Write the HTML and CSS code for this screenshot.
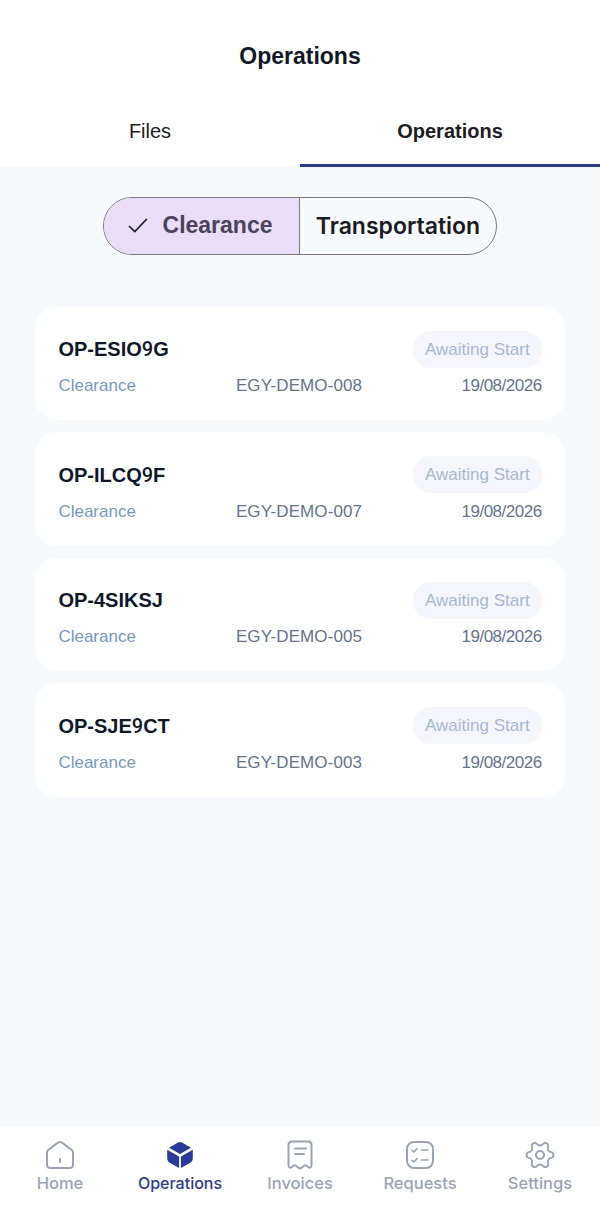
FILE: index.html
```html
<!DOCTYPE html>
<html lang="en">
<head>
    <meta charset="UTF-8">
    <meta name="viewport" content="width=device-width, initial-scale=1.0">
    <title>Operations</title>
    <link rel="stylesheet" href="styles.css">
</head>
<body>
    <div class="app">
        <header class="top">
            <h1 class="title">Operations</h1>
            <div class="tabs">
                <div class="tab">Files</div>
                <div class="tab active">Operations</div>
            </div>
        </header>

        <main class="content">
            <div class="segments">
                <div class="segment selected">
                    <svg class="check" width="20" height="15" viewBox="0 0 20 15" fill="none"><path d="M1 8l5.800 5.600L18.800 1" stroke="#1d1a24" stroke-width="1.700"/></svg>
                    <span>Clearance</span>
                </div>
                <div class="segment">Transportation</div>
            </div>

            <div class="cards">
                <div class="card">
                    <div class="row">
                        <span class="code">OP-ESIO<span class="digit">9</span>G</span>
                        <span class="status">Awaiting Start</span>
                    </div>
                    <div class="row meta">
                        <span class="type">Clearance</span>
                        <span class="ref">EGY-DEMO-008</span>
                        <span class="date">19/08/2026</span>
                    </div>
                </div>
                <div class="card">
                    <div class="row">
                        <span class="code">OP-ILCQ<span class="digit">9</span>F</span>
                        <span class="status">Awaiting Start</span>
                    </div>
                    <div class="row meta">
                        <span class="type">Clearance</span>
                        <span class="ref">EGY-DEMO-007</span>
                        <span class="date">19/08/2026</span>
                    </div>
                </div>
                <div class="card">
                    <div class="row">
                        <span class="code">OP-4SIKSJ</span>
                        <span class="status">Awaiting Start</span>
                    </div>
                    <div class="row meta">
                        <span class="type">Clearance</span>
                        <span class="ref">EGY-DEMO-005</span>
                        <span class="date">19/08/2026</span>
                    </div>
                </div>
                <div class="card">
                    <div class="row">
                        <span class="code">OP-SJE<span class="digit">9</span>CT</span>
                        <span class="status">Awaiting Start</span>
                    </div>
                    <div class="row meta">
                        <span class="type">Clearance</span>
                        <span class="ref">EGY-DEMO-003</span>
                        <span class="date">19/08/2026</span>
                    </div>
                </div>
            </div>
        </main>

        <nav class="nav">
            <div class="nav-item">
                <svg width="32" height="32" viewBox="0 0 32 32" fill="none" stroke="#9aa3b5" stroke-width="2" stroke-linejoin="round" stroke-linecap="round"><path d="M3 13.500c0-1.100.500-2 1.300-2.600l9.400-7c1.300-1 3.300-1 4.600 0l9.400 7c.800.600 1.300 1.500 1.300 2.600v12c0 2-1.500 3.500-3.500 3.500h-19c-2 0-3.500-1.500-3.500-3.500z"/><path d="M16 20v3"/></svg>
                <span>Home</span>
            </div>
            <div class="nav-item current">
                <svg width="32" height="32" viewBox="0 0 32 32" fill="#2a3a99"><path d="M13.600 3.700c1.500-.900 3.300-.900 4.800 0l8.600 5-11 6.300-11-6.300z"/><path d="M3.200 10.800l11.900 6.800v11.500l-9-5.200c-1.800-1-2.900-2.600-2.900-4.500z"/><path d="M28.800 10.800l-11.900 6.800v11.500l9-5.200c1.800-1 2.900-2.600 2.900-4.500z"/></svg>
                <span>Operations</span>
            </div>
            <div class="nav-item">
                <svg width="32" height="32" viewBox="0 0 32 32" fill="none" stroke="#9aa3b5" stroke-width="2" stroke-linejoin="round" stroke-linecap="round"><path d="M4.500 6c0-2 1.500-3.500 3.500-3.500h16c2 0 3.500 1.500 3.500 3.500v20.500c0 1.900-2 2.800-3.400 1.600l-1.200-1c-1-.9-2.500-.9-3.400 0l-1.200 1.200c-1.300 1.200-3.300 1.200-4.600 0l-1.200-1.200c-.9-.9-2.400-.9-3.400 0l-1.200 1c-1.400 1.200-3.400.3-3.400-1.600z"/><path d="M11 9.500h11M11 15h9" stroke-width="1.800"/></svg>
                <span>Invoices</span>
            </div>
            <div class="nav-item">
                <svg width="32" height="32" viewBox="0 0 32 32" fill="none" stroke="#9aa3b5" stroke-width="2" stroke-linejoin="round" stroke-linecap="round"><rect x="3" y="3" width="26" height="26" rx="7"/><path d="M17.500 11h6.500M17.500 21h6.500M8 11.500l2 1.500 3-3.500M8 21.500l2 1.500 3-3.500" stroke-width="1.600"/></svg>
                <span>Requests</span>
            </div>
            <div class="nav-item">
                <svg width="32" height="32" viewBox="0 0 32 32" fill="none" stroke="#9aa3b5" stroke-width="2" stroke-linejoin="round" stroke-linecap="round"><circle cx="16" cy="16" r="4"/><path transform="translate(16 16) scale(.94) translate(-16 -16)" d="M29.250 13.420Q31.500 16 29.250 18.580Q22.500 19.750 24.860 26.190Q23.750 29.420 20.400 28.770Q16 23.500 11.600 28.770Q8.250 29.420 7.140 26.190Q9.500 19.750 2.750 18.580Q.500 16 2.750 13.420Q9.500 12.250 7.140 5.810Q8.250 2.580 11.600 3.230Q16 8.500 20.400 3.230Q23.750 2.580 24.860 5.810Q22.500 12.250 29.250 13.420z"/></svg>
                <span>Settings</span>
            </div>
        </nav>
    </div>
</body>
</html>
```

FILE: styles.css
```css
* {
    box-sizing: border-box;
}

body {
    margin: 0;
    font-family: "Liberation Sans", Arial, sans-serif;
    background-color: #f6fafd;
}

.app {
    height: 1208px;
    display: flex;
    flex-direction: column;
}

.top {
    background-color: white;
    height: 165.5px;
    padding-top: 42px;
}

.title {
    margin: 0;
    height: 28px;
    font-size: 23px;
    font-weight: 700;
    line-height: 28px;
    text-align: center;
    color: #111827;
}

.tabs {
    display: flex;
    margin-top: 31px;
}

.tab {
    flex: 1;
    height: 66px;
    padding-top: 18px;
    text-align: center;
    font-size: 20px;
    line-height: 24px;
    color: #1c1c22;
    border-bottom: 3px solid transparent;
}

.tab.active {
    font-weight: 700;
    border-bottom-color: #2a3a99;
}

.content {
    flex: 1;
    padding: 31px 35px 0;
}

.segments {
    display: flex;
    width: 394px;
    height: 58px;
    margin: 0 auto;
    border: 1px solid #7c757f;
    border-radius: 29px;
    overflow: hidden;
}

.segment {
    flex: 1;
    display: flex;
    align-items: center;
    justify-content: center;
    font-family: Inter, sans-serif;
    font-size: 23px;
    font-weight: 600;
    color: #1d1a24;
}

.segment.selected {
    flex: none;
    width: 196px;
    gap: 15px;
    padding-right: 3px;
    font-family: "Liberation Sans", Arial, sans-serif;
    font-weight: 700;
    background-color: #e8def8;
    color: #4a4458;
    border-right: 1px solid #7c757f;
}

.cards {
    display: flex;
    flex-direction: column;
    gap: 12px;
    margin-top: 52px;
}

.card {
    height: 113.6px;
    padding: 24px 23.4px 0;
    background-color: white;
    border-radius: 22px;
}

.row {
    display: flex;
    align-items: center;
    justify-content: space-between;
}

.code {
    font-size: 20px;
    font-weight: 700;
    color: #0f172a;
}

.digit {
    font-family: Roboto, sans-serif;
    font-weight: 500;
}

.status {
    height: 37px;
    padding: 0 12px;
    font-size: 17px;
    line-height: 38px;
    color: #a5b6d3;
    background-color: #f4f6fb;
    border-radius: 18px;
}

.meta {
    margin-top: 8.5px;
    font-size: 17px;
}

.type {
    color: #7599c4;
    width: 150px;
}

.ref {
    color: #64748b;
    letter-spacing: 0.1px;
}

.date {
    color: #64748b;
    width: 152px;
    text-align: right;
    letter-spacing: -0.5px;
}

.nav {
    display: flex;
    height: 82px;
    padding-top: 13px;
    background-color: white;
}

.nav-item {
    flex: 1;
    display: flex;
    flex-direction: column;
    align-items: center;
    font-family: Inter, sans-serif;
    font-size: 16.5px;
    font-weight: 500;
    line-height: 24px;
    color: #9aa3b5;
}

.nav-item svg {
    display: block;
}

.nav-item.current {
    font-size: 16px;
    color: #2a3a99;
}
```
